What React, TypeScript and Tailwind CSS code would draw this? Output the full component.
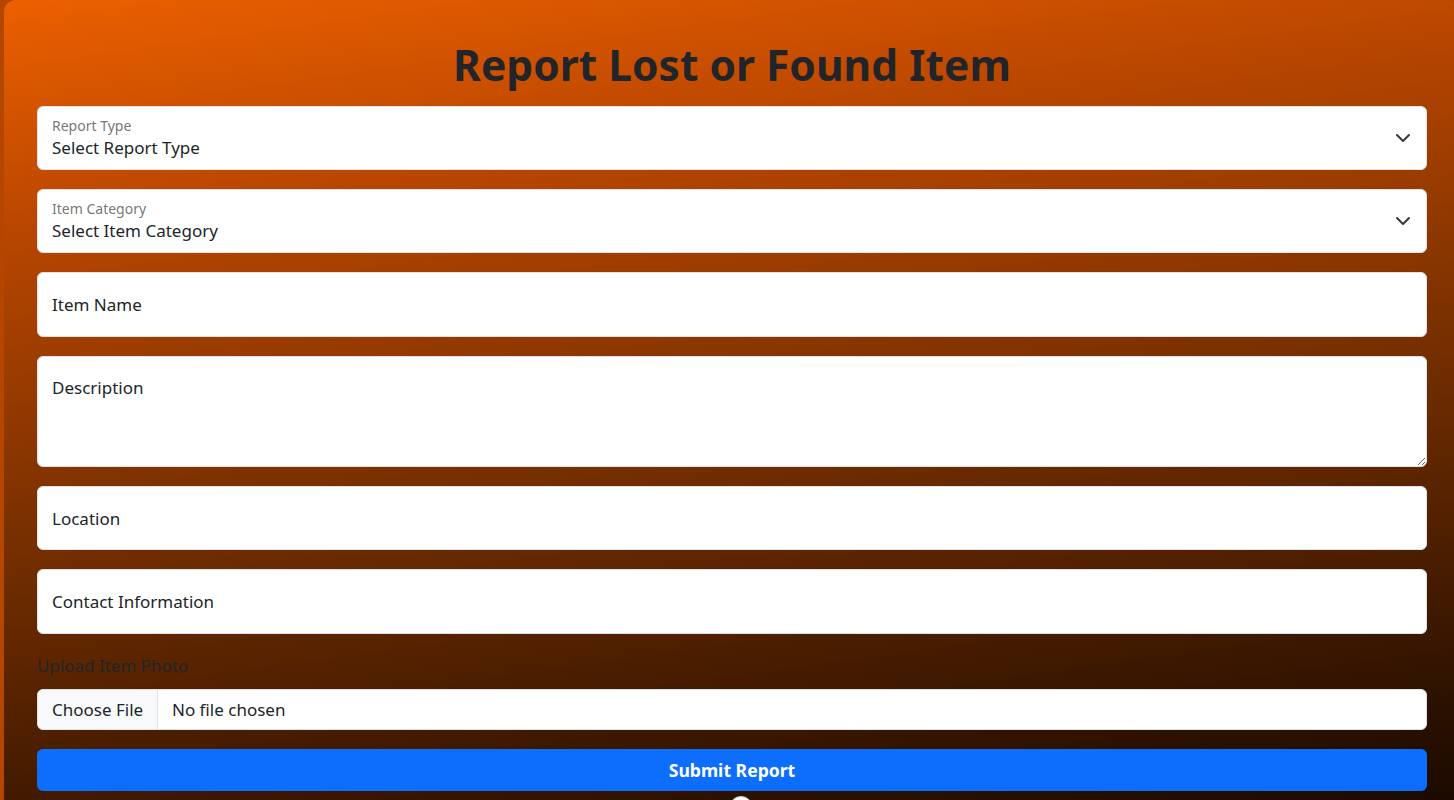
import React from "react";

const font = { fontFamily: '"Noto Sans", "Open Sans", sans-serif' };

const Chevron: React.FC = () => (
  <svg width="16" height="16" viewBox="0 0 16 16" fill="none" className="shrink-0">
    <path d="m2 5 6 6 6-6" stroke="#343a40" strokeWidth="2" strokeLinecap="round" strokeLinejoin="round" />
  </svg>
);

const SelectField: React.FC<{ label: string; value: string }> = ({ label, value }) => (
  <div className="flex h-[64px] items-center justify-between rounded-[6px] border border-[#dee2e6] bg-white pl-[14px] pr-[15px]">
    <div className="flex flex-col pt-[1px]">
      <span className="text-[14px] leading-[18px] text-[#212529]/65">{label}</span>
      <span className="text-[17px] leading-[26px] text-[#212529]">{value}</span>
    </div>
    <Chevron />
  </div>
);

const TextField: React.FC<{ placeholder: string; h: string }> = ({ placeholder, h }) => (
  <input
    type="text"
    placeholder={placeholder}
    className={`${h} w-full rounded-[6px] border border-[#dee2e6] bg-white px-[14px] text-[17px] text-[#212529] outline-none placeholder:text-[#212529]`}
    style={font}
  />
);

export default function App() {
  return (
    <div className="h-[800px] overflow-hidden bg-[#b54600]" style={font}>
      <div className="ml-[4px] w-[1456px] min-h-[860px] rounded-t-[12px] bg-[linear-gradient(172deg,#ec6000_0%,#b84600_22%,#6e2c00_55%,#2c1100_85%,#120600_100%)] px-[33px] pt-[36px]">
        <h1 className="mb-[12px] text-center text-[42.5px] font-bold leading-[58px] text-[#212529]">
          Report Lost or Found Item
        </h1>

        <div className="flex flex-col gap-[19px]">
          <SelectField label="Report Type" value="Select Report Type" />
          <SelectField label="Item Category" value="Select Item Category" />
          <TextField placeholder="Item Name" h="h-[65px]" />
          <textarea
            placeholder="Description"
            className="block h-[111px] w-full rounded-[6px] border border-[#dee2e6] bg-white px-[14px] pt-[18px] text-[17px] leading-[26px] text-[#212529] outline-none placeholder:text-[#212529]"
            style={font}
          />
          <TextField placeholder="Location" h="h-[64px]" />
          <TextField placeholder="Contact Information" h="h-[65px]" />
        </div>

        <div className="mt-[19px] text-[17px] leading-[26px] text-[#212529]">Upload Item Photo</div>
        <div className="mt-[10px] flex h-[41px] items-stretch overflow-hidden rounded-[6px] border border-[#dee2e6] bg-white text-[17px] text-[#212529]">
          <span className="flex w-[120px] items-center border-r border-[#dee2e6] bg-[#f8f9fa] pl-[14px]">Choose File</span>
          <span className="flex items-center pl-[14px]">No file chosen</span>
        </div>

        <button className="mt-[19px] flex h-[42px] w-full items-center justify-center rounded-[6px] bg-[#0d6efd] text-[17.6px] font-bold text-white">
          Submit Report
        </button>

        <div className="mt-[5px] flex justify-center pl-[18px]">
          <span className="h-[24px] w-[24px] rounded-full border border-[#ccc] bg-white" />
        </div>
      </div>
    </div>
  );
}
